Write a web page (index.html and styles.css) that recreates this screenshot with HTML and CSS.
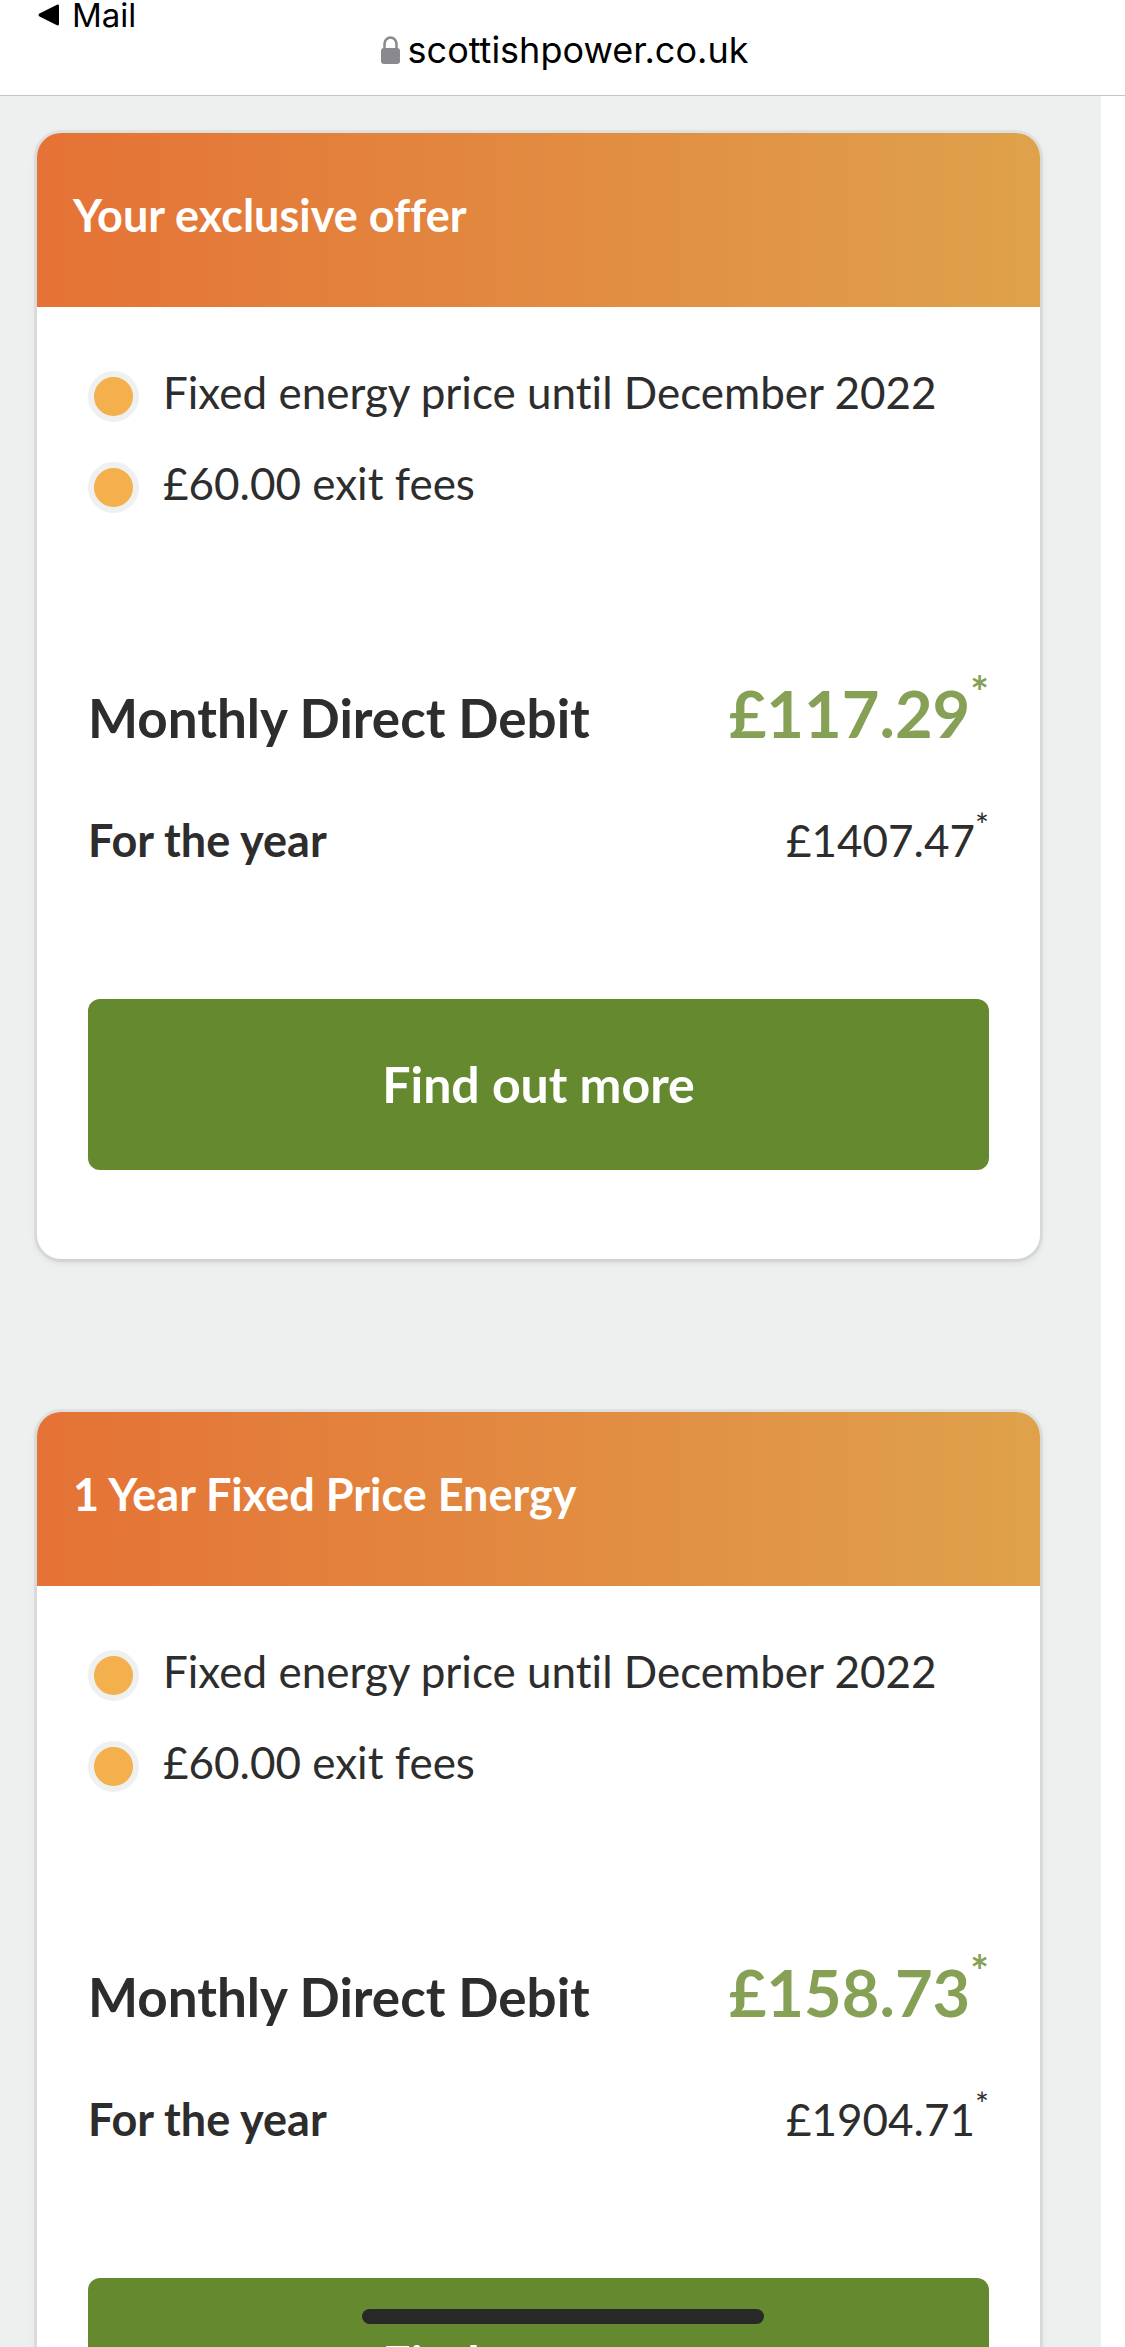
FILE: index.html
```html
<!DOCTYPE html>
<html lang="en">
	<head>
		<meta charset="UTF-8" />
		<meta name="viewport" content="width=device-width, initial-scale=1.0" />
		<title>ScottishPower</title>
		<link rel="stylesheet" href="styles.css">
	</head>
	<body>
		<header class="topbar">
			<a class="back" href="#">
				<svg width="22" height="22" viewBox="0 0 22 22"><path d="M21 2v18q0 2-2 1.300L2 12.800q-3-1.800 0-3.600L19 .7Q21 0 21 2z" /></svg>
				Mail
			</a>
			<div class="address">
				<svg class="lock" width="19" height="28" viewBox="0 0 19 28">
					<path d="M3.500 13V8a6 6.500 0 0 1 12 0v5" fill="none" stroke="#8a8a8e" stroke-width="2.500" />
					<rect x="0" y="12" width="19" height="16" rx="3" fill="#8a8a8e" />
				</svg>
				<span>scottishpower.co.uk</span>
			</div>
		</header>

		<main class="offers">
			<section class="card">
				<h2 class="card-title">Your exclusive offer</h2>
				<div class="card-body">
					<ul class="features">
						<li>Fixed energy price until December 2022</li>
						<li>£60.00 exit fees</li>
					</ul>
					<div class="row monthly">
						<span>Monthly Direct Debit</span>
						<span class="price">£117.29<sup>*</sup></span>
					</div>
					<div class="row yearly">
						<span>For the year</span>
						<span class="price">£1407.47<sup>*</sup></span>
					</div>
					<button type="button" class="more">Find out more</button>
				</div>
			</section>

			<section class="card">
				<h2 class="card-title">1 Year Fixed Price Energy</h2>
				<div class="card-body">
					<ul class="features">
						<li>Fixed energy price until December 2022</li>
						<li>£60.00 exit fees</li>
					</ul>
					<div class="row monthly">
						<span>Monthly Direct Debit</span>
						<span class="price">£158.73<sup>*</sup></span>
					</div>
					<div class="row yearly">
						<span>For the year</span>
						<span class="price">£1904.71<sup>*</sup></span>
					</div>
					<button type="button" class="more">Find out more</button>
				</div>
			</section>
		</main>

		<div class="home-bar"></div>
	</body>
</html>
```

FILE: styles.css
```css
*,
*::before {
	box-sizing: border-box;
}
body {
	display: flex;
	flex-direction: column;
	height: 100vh;
	margin: 0;
	overflow: hidden;
	background-color: #fff;
	color: #2d2d2d;
	font-family: Lato, "Open Sans", sans-serif;
	font-size: 44px;
	line-height: 68px;
	font-variant-ligatures: none;
}

/* browser bar */
.topbar {
	flex: none;
	padding-bottom: 25px;
	border-bottom: 1px solid #c4c5c6;
	background-color: #fff;
	color: #000;
	font-family: Inter, "Liberation Sans", sans-serif;
}
.back {
	display: flex;
	align-items: center;
	gap: 12px;
	padding-left: 38px;
	color: #000;
	font-size: 33px;
	line-height: 30px;
	text-decoration: none;
}
.address {
	display: flex;
	justify-content: center;
	align-items: center;
	gap: 8px;
	padding-left: 4px;
	font-size: 36px;
	line-height: 40px;
}

/* offers */
.offers {
	flex: 1;
	min-height: 0;
	margin-right: 24px;
	padding: 37px 61px 0 37px;
	overflow: hidden;
	background-color: #eef0f0;
}
.card {
	margin-bottom: 153px;
	border-radius: 24px;
	background-color: #fff;
	box-shadow: 0 0 0 3px rgba(0, 0, 0, 0.05), 0 3px 9px rgba(0, 0, 0, 0.1);
}
.card-title {
	margin: 0;
	padding: 48px 36px 58px;
	border-radius: 24px 24px 0 0;
	background: linear-gradient(to right, #e57236, #dfa24b);
	color: #fff;
	font-size: 45px;
	font-weight: bold;
}
.card-body {
	padding: 51px 51px 89px;
}
.features {
	display: grid;
	gap: 23px;
	margin: 0 0 156px;
	padding: 0;
	list-style: none;
}
.features li {
	display: flex;
	gap: 24px;
}
.features li::before {
	content: "";
	flex: none;
	width: 51px;
	height: 51px;
	margin-top: 13px;
	border: 6px solid #eff0f0;
	border-radius: 50%;
	background-color: #f3b04c;
}
.row {
	display: flex;
	justify-content: space-between;
	align-items: baseline;
	font-weight: bold;
}
.monthly {
	margin-bottom: 48px;
	font-size: 53px;
	line-height: 80px;
}
.monthly .price {
	color: #86a055;
	font-size: 65px;
}
.monthly sup {
	font-size: 44px;
	vertical-align: 30px;
}
.yearly {
	margin-bottom: 125px;
	font-size: 45px;
}
.yearly .price {
	font-size: 44px;
	font-weight: normal;
}
sup {
	font-size: 33px;
	line-height: 0;
	vertical-align: 20px;
}
.more {
	display: block;
	width: 100%;
	height: 171px;
	padding: 0 0 2px;
	border: none;
	border-radius: 12px;
	background-color: #65892f;
	color: #fff;
	font-family: inherit;
	font-size: 50px;
	font-weight: bold;
	cursor: pointer;
}

.home-bar {
	position: fixed;
	bottom: 23px;
	left: 50%;
	width: 402px;
	height: 15px;
	margin-left: -201px;
	border-radius: 8px;
	background-color: #282828;
}
```
